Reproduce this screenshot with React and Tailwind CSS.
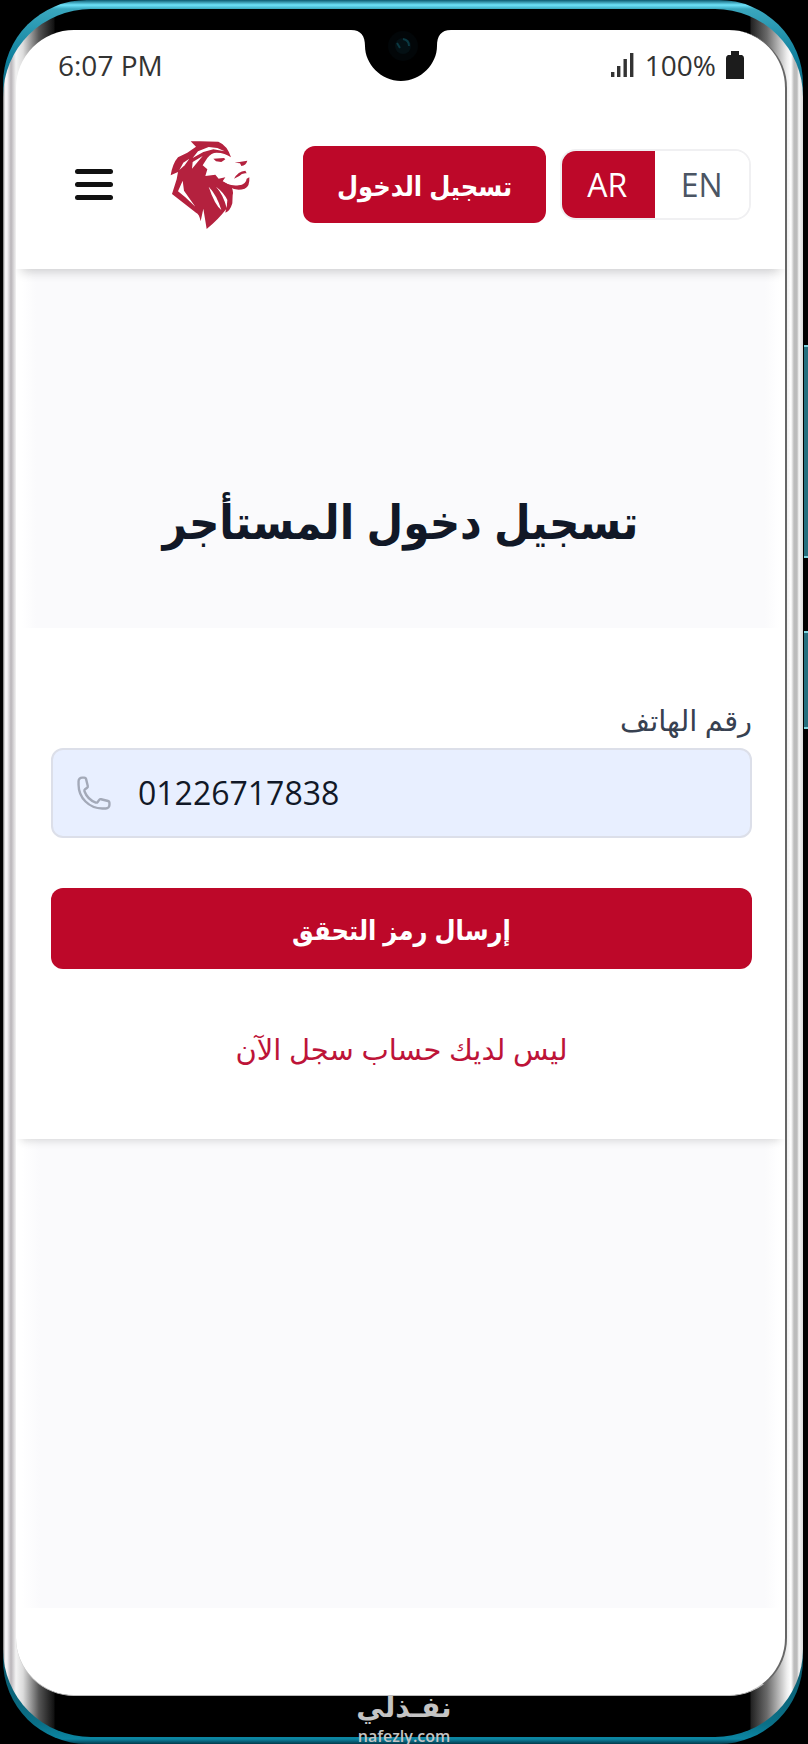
import React from "react";

function SignalIcon() {
  return (
    <svg viewBox="0 0 24 26" className="h-[26px] w-6" fill="#333333" aria-hidden="true">
      <rect x="0" y="20" width="3.4" height="5" />
      <rect x="6" y="14" width="3.4" height="11" />
      <rect x="12.5" y="7" width="3.4" height="18" />
      <rect x="19" y="1" width="3.4" height="24" />
    </svg>
  );
}

function BatteryIcon() {
  return (
    <svg viewBox="0 0 18 28" className="h-7 w-[18px]" fill="#1c1c1c" aria-hidden="true">
      <path d="M5 0h8v4h3q2 1 2 3v21H0V7q0-2 2-3h3z" />
    </svg>
  );
}

function Notch() {
  return (
    <svg
      viewBox="0 0 100 51"
      className="absolute top-0 left-1/2 h-[51px] w-[100px] -translate-x-1/2"
      aria-hidden="true"
    >
      <path
        d="M0 0C10 0 14 6 14 16C14 34 30 51 50 51C70 51 86 34 86 16C86 6 90 0 100 0Z"
        fill="#000000"
      />
      <circle cx="52" cy="16" r="15" fill="#020608" />
      <circle cx="52" cy="16" r="8" fill="#041014" />
      <path d="M46 13l3 5M52 9q6 1 6 7" fill="none" stroke="#0b3942" strokeWidth="2" />
    </svg>
  );
}

function LionLogo() {
  return (
    <svg viewBox="60 42 240 270" className="h-[90px] w-20" role="img" aria-label="Lion">
      <g fill="#b4213e">
        <path d="M122 46L150 46L205 47Q232 58 243 94Q225 80 200 80Q184 80 172 96L158 118L172 130L166 150L196 146L206 158L226 154L218 166L240 178Q252 192 248 208L247 232Q240 256 226 260L228 250Q206 280 170 309L160 248L152 286Q148 264 138 260L66 204L80 160L84 138L62 148Q68 112 84 94L112 80L138 62Z" />
        <path d="M210 160Q234 182 266 178Q288 176 290 158L298 154Q300 182 284 188Q262 196 238 184Z" />
        <path d="M254 110L292 104Q288 118 274 120L270 112Z" />
        <path d="M252 158Q264 136 286 134L290 142Q276 140 268 150Z" />
        <path d="M190 98L222 96L226 100L214 108L198 106Z" />
      </g>
      <g fill="#ffffff">
        <path d="M176 63L202 66L224 76L190 70L160 78L128 96L144 76Z" />
        <path d="M128 108L158 90L146 104L126 128Z" />
        <path d="M100 110L118 98L104 118L88 132Z" />
        <path d="M98 164L102 194L136 242L106 214L84 196Z" />
        <path d="M176 182Q200 206 214 252Q194 236 176 182Z" />
        <path d="M198 182Q222 200 232 222L230 246Q220 206 198 182Z" />
      </g>
    </svg>
  );
}

function PhoneIcon() {
  return (
    <svg
      viewBox="0 0 24 24"
      className="size-[38px] shrink-0"
      fill="none"
      stroke="#a3a9b8"
      strokeWidth="1.5"
      strokeLinecap="round"
      strokeLinejoin="round"
      aria-hidden="true"
    >
      <path d="M2.25 6.75c0 8.284 6.716 15 15 15h2.25a2.25 2.25 0 0 0 2.25-2.25v-1.372c0-.516-.351-.966-.852-1.091l-4.423-1.106c-.44-.11-.902.055-1.173.417l-.97 1.293c-.282.376-.769.542-1.21.38a12.035 12.035 0 0 1-7.143-7.143c-.162-.441.004-.928.38-1.21l1.293-.97c.363-.271.527-.734.417-1.173L6.963 3.102a1.125 1.125 0 0 0-1.091-.852H4.5A2.25 2.25 0 0 0 2.25 4.5v2.25Z" />
    </svg>
  );
}

function StatusBar() {
  return (
    <div className="flex h-[70px] items-center justify-between pr-[41px] pl-[42px] text-[28px] leading-9 text-[#333333]">
      <span>6:07 PM</span>
      <span className="flex items-center gap-[10px]">
        <SignalIcon />
        <span>100%</span>
        <BatteryIcon />
      </span>
    </div>
  );
}

function Header() {
  return (
    <header className="relative flex h-[169px] items-center bg-white pr-[34px] pl-[59px] shadow-[0_8px_10px_-5px_rgba(0,0,0,0.18)]">
      <button type="button" aria-label="القائمة" className="flex w-[38px] flex-col gap-2">
        <span className="h-[5px] rounded-full bg-[#111111]" />
        <span className="h-[5px] rounded-full bg-[#111111]" />
        <span className="h-[5px] rounded-full bg-[#111111]" />
      </button>
      <a href="#home" className="ml-[57px]">
        <LionLogo />
      </a>
      <div className="ml-auto flex items-center gap-[14px]">
        <button
          type="button"
          dir="rtl"
          className="h-[77px] w-[243px] rounded-xl bg-[#bd0829] pt-1 font-['Open_Sans','DejaVu_Sans_Condensed','DejaVu_Sans',sans-serif] text-[27px] font-bold whitespace-nowrap text-white"
        >
          تسجيل الدخول
        </button>
        <div className="flex h-[71px] w-[191px] overflow-hidden rounded-2xl border-2 border-[#f0f0f2] text-[32px]">
          <button type="button" className="-my-[2px] -ml-[2px] flex-1 bg-[#bd0829] text-white">
            AR
          </button>
          <button type="button" className="flex-1 bg-white text-[#4b5563]">
            EN
          </button>
        </div>
      </div>
    </header>
  );
}

function LoginCard() {
  return (
    <form
      dir="rtl"
      className="relative flex flex-col bg-white pt-[72px] pr-[33px] pb-[66px] pl-[35px] shadow-[0_7px_8px_-5px_rgba(0,0,0,0.14)]"
      onSubmit={(event) => event.preventDefault()}
    >
      <label htmlFor="phone" className="mb-2 text-[29px] leading-10 text-[#374151]">
        رقم الهاتف
      </label>
      <div
        dir="ltr"
        className="flex h-[90px] items-center gap-[25px] rounded-xl border-2 border-[#dcdfe9] bg-[#e8efff] pr-6 pl-[22px]"
      >
        <PhoneIcon />
        <input
          id="phone"
          type="tel"
          defaultValue="01226717838"
          className="min-w-0 flex-1 bg-transparent text-[32px] leading-10 text-[#111827] outline-none"
        />
      </div>
      <button
        type="submit"
        className="mt-[50px] h-[81px] rounded-xl bg-[#bd0829] pt-1 font-['Open_Sans','DejaVu_Sans_Condensed','DejaVu_Sans',sans-serif] text-[27px] font-bold text-white"
      >
        إرسال رمز التحقق
      </button>
      <a href="#register" className="mt-14 self-center text-[29px] leading-[48px] text-[#bd1438]">
        ليس لديك حساب سجل الآن
      </a>
    </form>
  );
}

function Watermark() {
  return (
    <div className="absolute bottom-0 left-1/2 flex -translate-x-1/2 flex-col items-center text-[#c4c4c4]">
      <span dir="rtl" className="mb-2 text-[28px] leading-7 font-bold">
        نفـذلي
      </span>
      <span className="text-base leading-4 font-semibold">nafezly.com</span>
    </div>
  );
}

export default function App() {
  return (
    <div className="relative flex min-h-screen bg-black pr-[5px] pl-[3px] font-['Open_Sans','DejaVu_Sans',sans-serif]">
      <span className="absolute top-[345px] right-0 h-[213px] w-1 border-y-2 border-[#7fd5e0] bg-[#256e7d]" />
      <span className="absolute top-[631px] right-0 h-[98px] w-1 border-y-2 border-[#7fd5e0] bg-[#256e7d]" />
      <div className="flex flex-1 flex-col rounded-[84px] bg-[linear-gradient(to_bottom,#0b5a70_0,#6fe3fa_5px,#3aa7be_9px,#0f7f9c_60px,#0b4c5c_120px,#0b4c5c_calc(100%-120px),#0a7088_calc(100%-20px),#0c86a3_calc(100%-5px),#03394a_100%)] pt-[9px] pb-[7px]">
        <div className="flex flex-1 flex-col rounded-[88px] bg-[linear-gradient(to_right,#6b6b6b_0,#f4f2f4_2px,#f4f2f4_4px,#b9b5b9_8px,#f3f3f3_13px,#dcdcdc_20px,#555555_36px,#111111_51px,#000000_52px,#000000_calc(100%-53px),#222222_calc(100%-52px),#6a6a6a_calc(100%-36px),#eeeeee_calc(100%-16px),#ffffff_calc(100%-12px),#bcbcbc_calc(100%-9px),#bcbcbc_calc(100%-6px),#f6f6f6_calc(100%-4px),#d8d8d8_100%)] pt-[21px] pr-4 pb-[41px] pl-[13px]">
          <div className="relative flex flex-1 flex-col overflow-hidden rounded-[58px] border-r-2 border-b border-r-[#666666] border-b-[#bbbbbb] bg-white">
            <Notch />
            <StatusBar />
            <Header />
            <main className="flex flex-1 flex-col pb-[87px]">
              <section className="bg-[linear-gradient(to_right,#ffffff_6px,#fafafc_20px,#fafafc_calc(100%-20px),#ffffff_calc(100%-6px))] pt-[216px] pb-[71px]">
                <h1
                  dir="rtl"
                  className="text-center font-['Open_Sans','DejaVu_Sans_Condensed','DejaVu_Sans',sans-serif] text-[47px] leading-[72px] font-bold text-[#111827]"
                >
                  تسجيل دخول المستأجر
                </h1>
              </section>
              <LoginCard />
              <section className="flex-1 bg-[linear-gradient(to_right,#ffffff_6px,#fafafc_24px,#fafafc_calc(100%-20px),#ffffff_calc(100%-6px))]" />
            </main>
          </div>
        </div>
      </div>
      <Watermark />
    </div>
  );
}
